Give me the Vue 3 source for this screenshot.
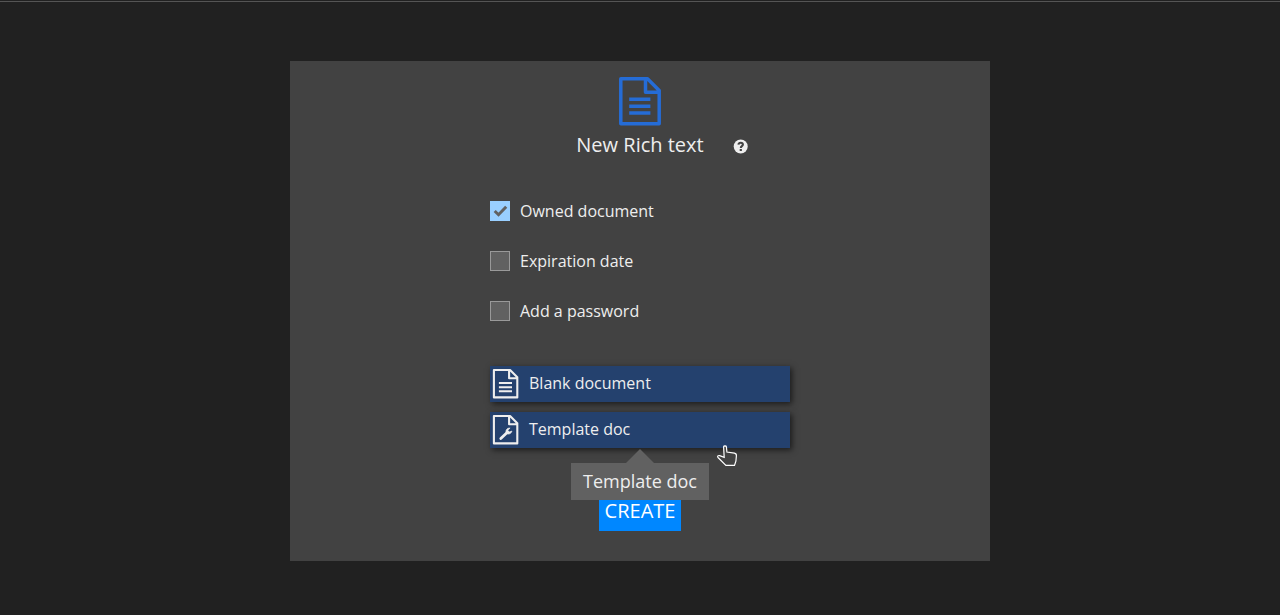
<script setup>
import { ref } from 'vue'

const options = ref([
  { label: 'Owned document', checked: true },
  { label: 'Expiration date', checked: false },
  { label: 'Add a password', checked: false },
])
const templates = [
  { label: 'Blank document', icon: 'text' },
  { label: 'Template doc', icon: 'wrench' },
]
</script>

<template>
  <main class="page">
    <section class="modal">
      <svg class="doc-icon" viewBox="0 0 42 49">
        <path d="M1.8 1.8H28.5L40.2 13.5V46.7H1.8ZM26.5 2V15.3H40" />
        <path d="M10.2 22.3H31.4M10.2 29.2H31.4M10.2 36.1H31.4" />
      </svg>
      <header class="heading">
        <h1>New Rich text</h1>
        <svg class="help" viewBox="-0.7 -0.5 15 15">
          <circle cx="7" cy="7" r="7" fill="#eee" />
          <path d="M4.7 5.1C5 3.6 6 3.2 7 3.2C8.3 3.2 9.2 4 9.2 5.1C9.2 6.7 7.1 6.6 7.1 8.4" fill="none" stroke="#424242" stroke-width="2.1" />
          <path d="M6 9.5H8.2V11.5H6Z" fill="#424242" />
        </svg>
      </header>
      <div class="options">
        <label v-for="o in options" :key="o.label" class="option" @click="o.checked = !o.checked">
          <span class="box" :class="{ checked: o.checked }">
            <svg v-if="o.checked" viewBox="0 0 20 20"><path d="M4.7 10L8.5 13.7L16.2 5.7" /></svg>
          </span>
          <span>{{ o.label }}</span>
        </label>
      </div>
      <div class="templates">
        <button v-for="t in templates" :key="t.label" class="template">
          <svg class="small-doc" viewBox="0.3 0.2 26 30">
            <path d="M1.2 1.2H17.4L24.6 8.4V28.6H1.2ZM16.4 1.5V9.4H24.5" />
            <path v-if="t.icon === 'text'" d="M6.2 14.2H19.3M6.2 18.4H19.3M6.2 22.5H19.3" />
            <g v-else>
              <path class="handle" d="M8.1 23.7L14.7 17.5" />
              <path class="jaw" d="M17.4 13.3C14.5 12.9 12.5 15.5 13.5 18.1C15.1 20.2 18.5 19.2 19.2 16.3L16.6 17.2L15.1 15.5Z" />
            </g>
          </svg>
          <span>{{ t.label }}</span>
        </button>
      </div>
      <div class="actions">
        <button class="create">CREATE</button>
      </div>
      <div class="tooltip">Template doc</div>
      <svg class="cursor" viewBox="0 0 22 24">
        <path d="M7.6 2.8C7.8 1.5 10.2 1.5 10.4 2.8L10.9 8L18.4 9.2C19.8 9.5 20.5 10.4 20.4 11.8L19.9 17.2L18.5 21.4H9.9L2 13.5C1 12.3 2.2 11.2 3.6 11.6L8.2 13.4Z" />
      </svg>
    </section>
  </main>
</template>

<style>
body {
  margin: 0;
  background: #212121;
}
</style>

<style scoped>
* {
  box-sizing: border-box;
}
.page {
  height: 615px;
  padding-top: 61px;
  background: linear-gradient(#212121 1px, #555 1px, #555 2px, #212121 2px);
  font: 16px/20px "Open Sans", "Noto Sans", sans-serif;
  color: #eee;
}
.modal {
  position: relative;
  display: flex;
  flex-direction: column;
  align-items: center;
  width: 700px;
  height: 500px;
  margin: 0 auto;
  padding-top: 16px;
  background: #424242;
}
.doc-icon {
  width: 42px;
  height: 49px;
  fill: none;
  stroke: #256cd6;
  stroke-width: 3.5;
  stroke-linejoin: round;
}
.heading {
  display: flex;
  align-items: center;
  height: 30px;
  margin-top: 4px;
  margin-left: 44.4px;
}
h1 {
  margin: 0;
  font-size: 20px;
  font-weight: 400;
  line-height: 30px;
}
.help {
  width: 15px;
  height: 15px;
  margin: 3px 0 0 29.4px;
}
.options {
  display: flex;
  flex-direction: column;
  gap: 30px;
  width: 300px;
  margin-top: 41px;
}
.option {
  display: flex;
  align-items: center;
  gap: 10px;
  height: 20px;
}
.box {
  width: 20px;
  height: 20px;
  border: 1px solid #999;
  background: #616161;
}
.box.checked {
  border: 0;
  background: #99cfff;
}
.box svg {
  display: block;
  width: 20px;
  height: 20px;
  fill: none;
  stroke: #616161;
  stroke-width: 3;
}
.templates {
  display: flex;
  flex-direction: column;
  gap: 10px;
  width: 300px;
  margin-top: 45px;
}
.template {
  display: flex;
  align-items: center;
  gap: 10px;
  height: 36px;
  padding: 0 3px;
  border: 0;
  background: #24416e;
  color: #eee;
  font: inherit;
  box-shadow: 2px 2px 6px rgba(0, 0, 0, 0.6);
}
.template span {
  padding-bottom: 2px;
}
.small-doc {
  width: 26px;
  height: 30px;
  overflow: visible;
  fill: none;
  stroke: #eee;
  stroke-width: 2.1;
  stroke-linejoin: round;
}
.handle {
  stroke-width: 2.8;
  stroke-linecap: round;
}
.jaw {
  fill: #eee;
  stroke-width: 0.7;
}
.actions {
  margin-top: 43px;
}
.create {
  display: block;
  width: 82px;
  height: 40px;
  padding: 0;
  border: 0;
  background: #0087ff;
  color: #fff;
  font: 20px/40px "Open Sans", "Noto Sans", sans-serif;
}
.tooltip {
  position: absolute;
  top: 402px;
  left: 281px;
  width: 138px;
  height: 37px;
  background: #616161;
  font-size: 18px;
  line-height: 37px;
  text-align: center;
}
.tooltip::before {
  content: "";
  position: absolute;
  bottom: 100%;
  left: 55px;
  border: 14px solid transparent;
  border-top: 0;
  border-bottom-color: #616161;
}
.cursor {
  position: absolute;
  top: 383px;
  left: 426px;
  width: 22px;
  height: 24px;
  fill: #424242;
  stroke: #fff;
  stroke-width: 1.2;
}
</style>
